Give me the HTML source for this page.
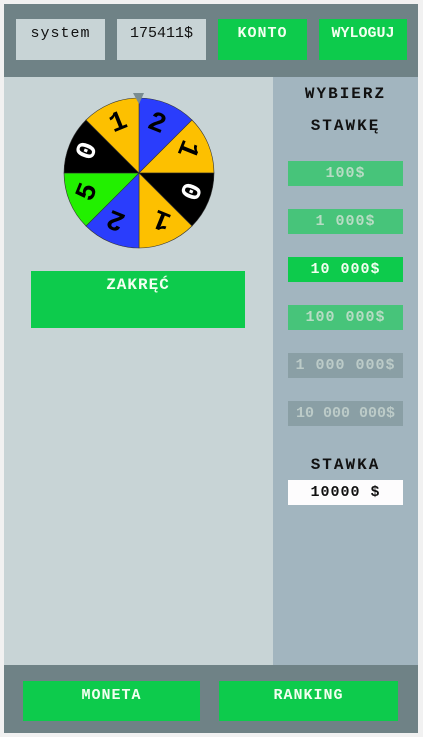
<!DOCTYPE html>
<html><head><meta charset="utf-8"><style>
*{margin:0;padding:0;box-sizing:border-box}
body{width:423px;height:737px;background:#f1f1f1;font-family:"Liberation Mono",monospace;font-weight:bold;position:relative;overflow:hidden}
.a{position:absolute}
.c{display:flex;align-items:center;justify-content:center;font-size:15px;letter-spacing:1px;white-space:nowrap}
.g{background:#0dcb4c;color:#f2fff0}
.l{background:#47c47a;color:#b8dcc4}
.d{background:#8a9fa5;color:#bccbc8}
</style></head><body>
<div class="a" style="left:4px;top:4px;width:414px;height:73px;background:#6f8286"></div>
<div class="a c" style="left:16px;top:19px;width:89px;height:41px;background:#c8d4d6;color:#111;align-items:flex-start;padding-top:6px;font-weight:normal">system</div>
<div class="a c" style="left:117px;top:19px;width:89px;height:41px;background:#c8d4d6;color:#111;align-items:flex-start;padding-top:6px;font-weight:normal;letter-spacing:0">175411$</div>
<div class="a c g" style="left:218px;top:19px;width:89px;height:41px;align-items:flex-start;padding-top:6px">KONTO</div>
<div class="a c g" style="left:319px;top:19px;width:88px;height:41px;align-items:flex-start;padding-top:6px;letter-spacing:0">WYLOGUJ</div>
<div class="a" style="left:4px;top:77px;width:269px;height:588px;background:#c8d4d6"></div>
<div class="a" style="left:273px;top:77px;width:145px;height:588px;background:#a2b5bf"></div>
<svg class="a" style="left:0;top:0" width="280" height="260">
<g stroke="#333" stroke-width="0.6">
<path d="M139 173L139 98A75 75 0 0 1 192 120Z" fill="#2a3dfc"/>
<path d="M139 173L192 120A75 75 0 0 1 214 173Z" fill="#fdc000"/>
<path d="M139 173L214 173A75 75 0 0 1 192 226Z" fill="#000"/>
<path d="M139 173L192 226A75 75 0 0 1 139 248Z" fill="#fdc000"/>
<path d="M139 173L139 248A75 75 0 0 1 86 226Z" fill="#2a3dfc"/>
<path d="M139 173L86 226A75 75 0 0 1 64 173Z" fill="#22f000"/>
<path d="M139 173L64 173A75 75 0 0 1 86 120Z" fill="#000"/>
<path d="M139 173L86 120A75 75 0 0 1 139 98Z" fill="#fdc000"/>
</g>
<path d="M133 93L144 93L139 104Z" fill="#7a8c90"/>
<g font-family="Liberation Mono" font-weight="bold" font-size="28" text-anchor="middle">
<text x="157" y="131" transform="rotate(22 157 123)" fill="#000">2</text>
<text x="188" y="157" transform="rotate(112 188 149)" fill="#000">1</text>
<text x="190" y="199" transform="rotate(112 190 191)" fill="#fff">0</text>
<text x="162" y="228" transform="rotate(202 162 220)" fill="#000">1</text>
<text x="116" y="228" transform="rotate(202 116 220)" fill="#000">2</text>
<text x="87" y="200" transform="rotate(-68 87 192)" fill="#000">5</text>
<text x="87" y="159" transform="rotate(-68 87 151)" fill="#fff">0</text>
<text x="118" y="130" transform="rotate(-22 118 122)" fill="#000">1</text>
</g></svg>
<div class="a c g" style="left:31px;top:271px;width:214px;height:57px;align-items:flex-start;padding-top:5px;font-size:16px">ZAKRĘĆ</div>
<div class="a c" style="left:273px;top:82px;width:145px;height:24px;color:#111;font-size:16px;letter-spacing:2px">WYBIERZ</div>
<div class="a c" style="left:273px;top:114px;width:145px;height:24px;color:#111;font-size:16px;letter-spacing:2px">STAWKĘ</div>
<div class="a c l" style="left:288px;top:161px;width:115px;height:25px">100$</div>
<div class="a c l" style="left:288px;top:209px;width:115px;height:25px">1 000$</div>
<div class="a c g" style="left:288px;top:257px;width:115px;height:25px">10 000$</div>
<div class="a c l" style="left:288px;top:305px;width:115px;height:25px">100 000$</div>
<div class="a c d" style="left:288px;top:353px;width:115px;height:25px">1 000 000$</div>
<div class="a c d" style="left:288px;top:401px;width:115px;height:25px;letter-spacing:0">10 000 000$</div>
<div class="a c" style="left:273px;top:454px;width:145px;height:22px;color:#111;font-size:16px;letter-spacing:2px">STAWKA</div>
<div class="a c" style="left:288px;top:480px;width:115px;height:25px;background:#fdfcfd;color:#111">10000 $</div>
<div class="a" style="left:4px;top:665px;width:414px;height:68px;background:#6f8286"></div>
<div class="a c g" style="left:23px;top:681px;width:177px;height:40px;align-items:flex-start;padding-top:6px">MONETA</div>
<div class="a c g" style="left:219px;top:681px;width:179px;height:40px;align-items:flex-start;padding-top:6px">RANKING</div>
</body></html>
